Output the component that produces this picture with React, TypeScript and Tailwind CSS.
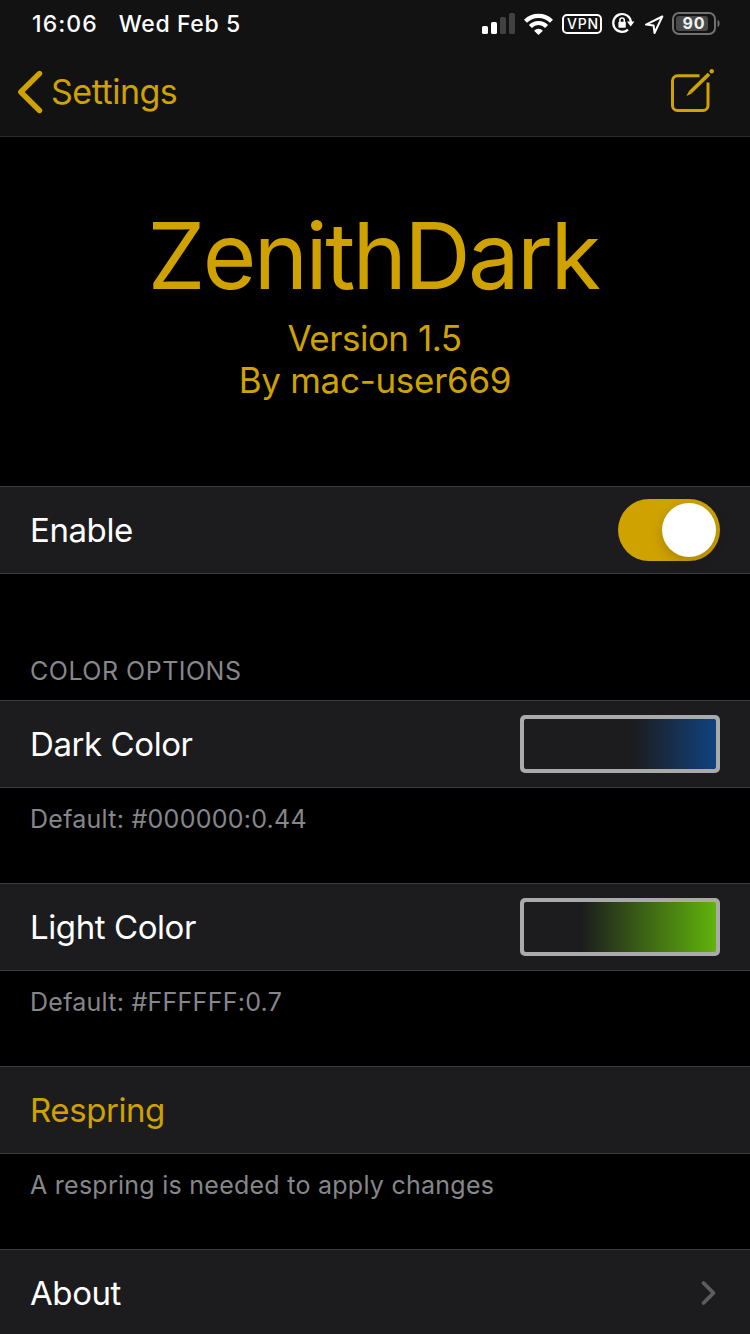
import type { ReactNode } from "react";

function StatusIcons() {
  return (
    <svg width="280" height="48" viewBox="470 0 280 48" fill="none" aria-hidden="true">
      <g fill="#fff">
        <rect x="482" y="26" width="6" height="8" rx="1.6" />
        <rect x="491" y="22" width="6" height="12" rx="1.6" />
        <rect x="500" y="17" width="6" height="17" rx="1.6" fill="#414141" />
        <rect x="509" y="13" width="6" height="21" rx="1.6" fill="#414141" />
      </g>
      <g stroke="#fff" strokeWidth="4.2">
        <path d="M525.5 21.2a18.4 18.4 0 0 1 26 0" />
        <path d="M530.4 26.4a11.4 11.4 0 0 1 16.2 0" />
      </g>
      <path d="M538.5 35l-4.4-4.3a6 6 0 0 1 8.800 0z" fill="#fff" />
      <rect x="563" y="15" width="38" height="18" rx="4" stroke="#fff" strokeWidth="2" />
      <text x="567" y="29" fontSize="14" fontWeight="500" textLength="31" fill="#fff">VPN</text>
      <path d="M628 29.600A8.900 8.900 0 1 1 631 22.500" stroke="#fff" strokeWidth="2.2" />
      <path d="M627 21.500h7.400l-3.700 5z" fill="#fff" />
      <rect x="618.400" y="21.800" width="7.400" height="5.900" rx="0.8" fill="#fff" />
      <path d="M619.900 22v-1.8a2.200 2.200 0 0 1 4.400 0V22" stroke="#fff" strokeWidth="1.5" />
      <path d="M662.300 16.500L646 24.600l7.600.9.900 7.500z" stroke="#fff" strokeWidth="2" strokeLinejoin="round" />
      <rect x="673" y="13" width="42" height="21" rx="6" stroke="#717171" strokeWidth="2" />
      <rect x="676" y="16" width="32" height="15" rx="3" fill="#4a4a4a" />
      <path d="M718 20.5c1.5 1 1.5 5 0 6z" fill="#717171" stroke="#717171" />
      <text x="682.6" y="28.6" fontSize="16" fontWeight="700" textLength="22" fill="#f2f2f2">90</text>
    </svg>
  );
}

function Row({ children }: { children: ReactNode }) {
  return (
    <div className="flex h-[88px] shrink-0 items-center justify-between border-y border-[#3d3d41] bg-[#1c1c1e] px-[30px]">
      {children}
    </div>
  );
}

function Label({ children }: { children: ReactNode }) {
  return <span className="pt-[2px] text-[33px] tracking-[-0.42px]">{children}</span>;
}

function Swatch({ fill }: { fill: string }) {
  return (
    <div className="h-[58px] w-[200px] rounded-[5px] bg-[#aaaaaa] p-1">
      <div className={`h-full w-full rounded-[2px] ${fill}`} />
    </div>
  );
}

function Note({ children }: { children: ReactNode }) {
  return (
    <div className="h-[95px] px-[30px] pt-[15px] text-[25px] leading-[32px] tracking-[0.26px] text-[#86868b]">
      {children}
    </div>
  );
}

export default function App() {
  return (
    <div className="flex h-[1334px] w-[750px] flex-col overflow-hidden bg-black font-['Inter','Liberation_Sans',sans-serif] text-white">
      <header className="flex h-[137px] shrink-0 flex-col border-b border-[#2b2b2b] bg-[#121212]">
        <div className="flex h-12 items-center justify-between">
          <div className="flex gap-[21px] pl-8 text-[23px] font-medium leading-[46px] whitespace-nowrap">
            <span className="tracking-[1.1px]">16:06</span>
            <span className="tracking-[0.6px]">Wed Feb 5</span>
          </div>
          <StatusIcons />
        </div>
        <div className="flex h-[88px] items-center justify-between pl-[17px] pr-[36px] text-[#cfa200]">
          <div className="flex items-center gap-[8px]">
            <svg width="26" height="44" viewBox="0 0 26 44" fill="none" aria-hidden="true">
              <path d="M22.500 3.500L3.800 22l18.700 18.500" stroke="currentColor" strokeWidth="5.400" strokeLinecap="round" strokeLinejoin="round" />
            </svg>
            <span className="text-[34px] leading-[44px] tracking-[-0.48px]">Settings</span>
          </div>
          <svg className="overflow-visible" width="44" height="44" viewBox="670 70 44 44" fill="none" stroke="currentColor" aria-hidden="true">
            <path d="M699.500 75.800H677.500a5 5 0 0 0-5 5v24.700a5 5 0 0 0 5 5h25.500a5 5 0 0 0 5-5V82.500" strokeWidth="3" />
            <path d="M709 74L690.500 92" strokeWidth="3.800" />
            <path d="M689.200 90.700l-2.800 5.400 5.500-2.700z" fill="currentColor" stroke="none" />
            <circle cx="711.700" cy="71.200" r="2.200" fill="currentColor" stroke="none" />
          </svg>
        </div>
      </header>
      <main className="flex flex-col">
        <section className="flex h-[349px] shrink-0 flex-col items-center pt-[65px] text-[#cfa200]">
          <h1 className="pr-[4px] text-[92px] leading-[108px] tracking-[-2.65px] whitespace-nowrap">ZenithDark</h1>
          <p className="mt-[7px] pr-px text-[35px] leading-[42px] tracking-[-0.5px]">Version 1.5</p>
          <p className="text-[35px] leading-[42px] tracking-[-0.3px]">By mac-user669</p>
        </section>
        <Row>
          <Label>Enable</Label>
          <div className="flex h-[62px] w-[102px] items-center justify-end rounded-full bg-[#cfa200] p-1">
            <div className="size-[54px] rounded-full bg-white shadow-[0_4px_12px_rgba(0,0,0,0.18)]" />
          </div>
        </Row>
        <div className="flex h-[126px] items-end px-[30px] pb-[13px] text-[25px] leading-[32px] tracking-[0.5px] text-[#86868b]">
          <span>COLOR OPTIONS</span>
        </div>
        <Row>
          <Label>Dark Color</Label>
          <Swatch fill="bg-[linear-gradient(90deg,#1c1c1e_57%,#10427f_100%)]" />
        </Row>
        <Note>Default: #000000:0.44</Note>
        <Row>
          <Label>Light Color</Label>
          <Swatch fill="bg-[linear-gradient(90deg,#1c1c1e_30%,#60b40b_100%)]" />
        </Row>
        <Note>Default: #FFFFFF:0.7</Note>
        <Row>
          <div className="flex text-[#cfa200]">
            <Label>Respring</Label>
          </div>
        </Row>
        <Note>A respring is needed to apply changes</Note>
        <Row>
          <Label>About</Label>
          <svg width="22" height="28" viewBox="0 0 22 28" fill="none" aria-hidden="true">
            <path d="M5.500 4l10 10-10 10" stroke="#5b5b60" strokeWidth="3.800" strokeLinecap="round" strokeLinejoin="round" />
          </svg>
        </Row>
      </main>
    </div>
  );
}
